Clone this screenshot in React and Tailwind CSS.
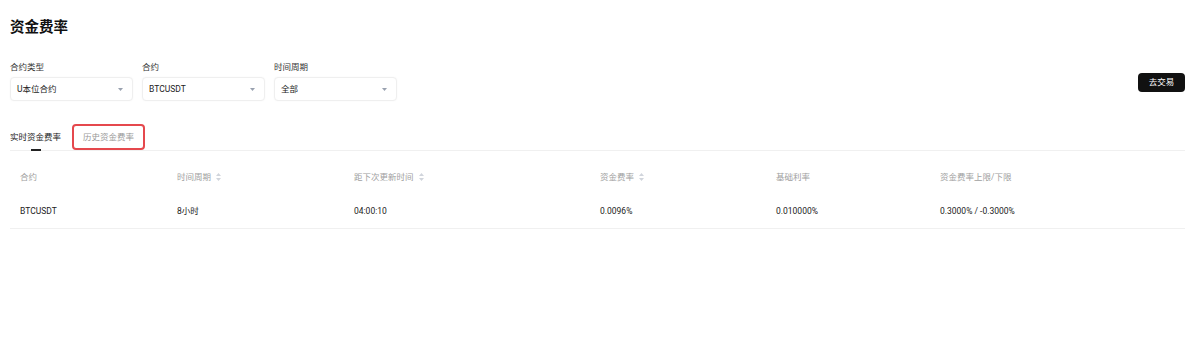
const font = { fontFamily: '"Roboto", "Noto Sans CJK SC", sans-serif' };

function Caret() {
  return (
    <svg width="5" height="3" viewBox="0 0 5 3" className="text-gray-400">
      <path d="M0 0h5L2.5 3z" fill="currentColor" />
    </svg>
  );
}

function SortIcon() {
  return (
    <svg width="5" height="8" viewBox="0 0 5 8" className="ml-[5px] text-gray-300">
      <path d="M0 3h5L2.5 0z M0 5h5L2.5 8z" fill="currentColor" />
    </svg>
  );
}

function Select({ label, value }) {
  return (
    <div className="flex flex-col">
      <span className="text-[8.5px] leading-3 text-[#333]">{label}</span>
      <div className="mt-[4px] flex h-[24px] w-[123px] items-center justify-between rounded-[4px] border border-[#efefef] bg-white pl-[6px] pr-[9px] shadow-[0_0_2px_rgba(0,0,0,0.04)]">
        <span className="text-[8.5px] text-[#222]">{value}</span>
        <Caret />
      </div>
    </div>
  );
}

const cols = [
  { t: '合约' },
  { t: '时间周期', sort: true },
  { t: '距下次更新时间', sort: true },
  { t: '资金费率', sort: true },
  { t: '基础利率' },
  { t: '资金费率上限/下限' },
];
const row = ['BTCUSDT', '8小时', '04:00:10', '0.0096%', '0.010000%', '0.3000% / -0.3000%'];
const grid = 'grid grid-cols-[157px_177px_246px_176px_164px_1fr] pl-[10px]';

export default function App() {
  return (
    <div className="h-[354px] w-[1200px] bg-white pl-[10px] pr-[15px] text-[#222]" style={font}>
      <h1 className="pt-[18px] text-[14.5px] font-bold leading-5 text-[#111]">资金费率</h1>

      <div className="mt-[23px] flex items-start justify-between">
        <div className="flex gap-[9px]">
          <Select label="合约类型" value="U本位合约" />
          <Select label="合约" value="BTCUSDT" />
          <Select label="时间周期" value="全部" />
        </div>
        <button className="mt-[12px] h-[19px] w-[47px] rounded-[4px] bg-[#111] text-[8.5px] leading-[19px] text-white">
          去交易
        </button>
      </div>

      <div className="mt-[23px] flex items-end border-b border-[#f0f0f0]">
        <div className="relative flex h-[26px] items-center pr-[11px]">
          <span className="text-[8.5px] text-[#222]">实时资金费率</span>
          <span className="absolute bottom-[-1px] left-[21px] h-[2px] w-[10px] bg-[#222]" />
        </div>
        <div className="flex h-[26px] w-[73px] items-center justify-center rounded-[4px] border-2 border-[#e5484d]">
          <span className="text-[8.5px] text-[#999]">历史资金费率</span>
        </div>
      </div>

      <div className={`${grid} h-[44px] pt-[20px] text-[8.5px] leading-3 text-[#a0a0a0]`}>
        {cols.map((c) => (
          <div key={c.t} className="flex h-3 items-center">
            {c.t}
            {c.sort && <SortIcon />}
          </div>
        ))}
      </div>
      <div className={`${grid} h-[34px] border-b border-[#f0f0f0] pt-[10px] text-[8.5px] leading-3 text-[#222]`}>
        {row.map((v) => (
          <div key={v}>{v}</div>
        ))}
      </div>
    </div>
  );
}
